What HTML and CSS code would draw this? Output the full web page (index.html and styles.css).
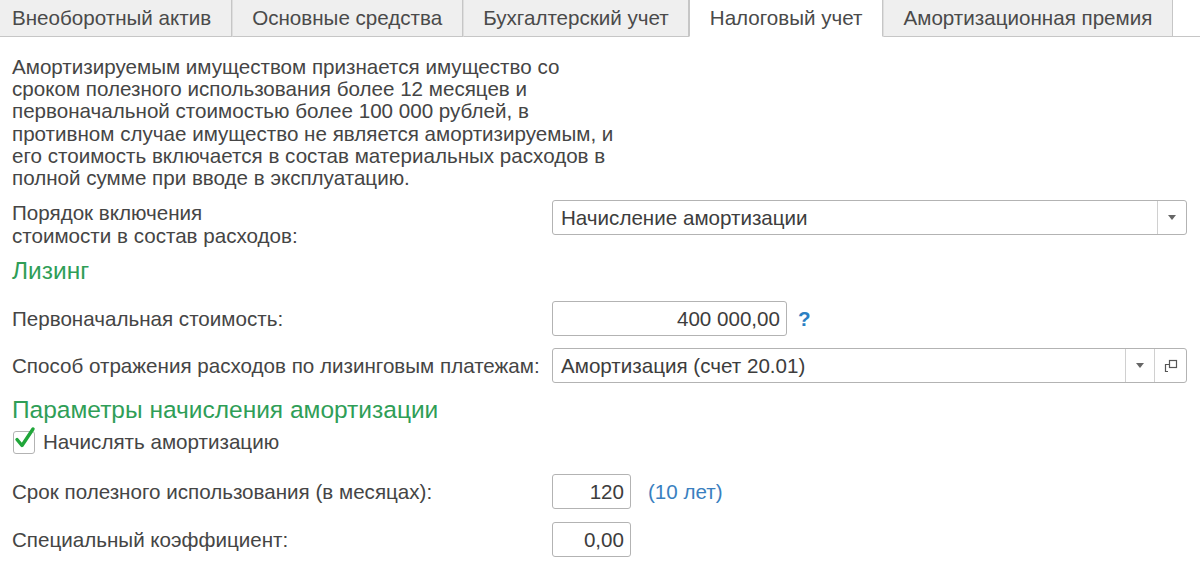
FILE: index.html
```html
<!DOCTYPE html>
<html lang="ru">
<head>
<meta charset="utf-8">
<link rel="stylesheet" href="styles.css">
</head>
<body>
<div class="tabs">
  <div class="tab first">Внеоборотный актив</div>
  <div class="tab">Основные средства</div>
  <div class="tab">Бухгалтерский учет</div>
  <div class="tab active">Налоговый учет</div>
  <div class="tab">Амортизационная премия</div>
  <div class="tab-fill"></div>
</div>
<div class="form">
  <p class="note">Амортизируемым имуществом признается имущество со<br>сроком полезного использования более 12 месяцев и<br>первоначальной стоимостью более 100 000 рублей, в<br>противном случае имущество не является амортизируемым, и<br>его стоимость включается в состав материальных расходов в<br>полной сумме при вводе в эксплуатацию.</p>

  <div class="row row-order">
    <div class="label">Порядок включения<br>стоимости в состав расходов:</div>
    <div class="field select">
      <span class="value">Начисление амортизации</span>
      <span class="btn"><span class="arrow"></span></span>
    </div>
  </div>

  <h2 class="group group-leasing">Лизинг</h2>

  <div class="row row-cost">
    <div class="label">Первоначальная стоимость:</div>
    <div class="field num cost">400 000,00</div>
    <span class="help">?</span>
  </div>

  <div class="row">
    <div class="label">Способ отражения расходов по лизинговым платежам:</div>
    <div class="field select">
      <span class="value">Амортизация (счет 20.01)</span>
      <span class="btn"><span class="arrow"></span></span>
      <span class="btn open">
        <svg width="14" height="14" viewBox="0 0 14 14"><rect x="5.5" y="1.5" width="7" height="7" fill="none" stroke="#555" stroke-width="1.2"/><path d="M5 5.5 H1.5 V12.5 H4" fill="none" stroke="#555" stroke-width="1.2"/></svg>
      </span>
    </div>
  </div>

  <h2 class="group group-params">Параметры начисления амортизации</h2>

  <label class="check-row">
    <span class="checkbox">
      <svg width="24" height="26" viewBox="0 0 24 26"><path d="M4 13.5 L9 19.5 L20 3" fill="none" stroke="#20a63a" stroke-width="3.4" stroke-linecap="round" stroke-linejoin="round"/></svg>
    </span>
    Начислять амортизацию
  </label>

  <div class="row row-term">
    <div class="label">Срок полезного использования (в месяцах):</div>
    <div class="field num short">120</div>
    <span class="hint">(10 лет)</span>
  </div>

  <div class="row row-coef">
    <div class="label">Специальный коэффициент:</div>
    <div class="field num short">0,00</div>
  </div>
</div>
</body>
</html>
```

FILE: styles.css
```css
html, body {
  margin: 0;
  padding: 0;
  background: #ffffff;
}

body {
  font-family: "Liberation Sans", Arial, sans-serif;
  font-size: 20.6px;
  color: #454545;
  width: 1200px;
  height: 583px;
  overflow: hidden;
}

.tabs {
  display: flex;
  height: 37px;
  background: #ffffff;
}

.tab {
  box-sizing: border-box;
  height: 37px;
  padding: 0 19.5px;
  display: flex;
  align-items: center;
  background: #efefef;
  border: 1px solid #c6c6c6;
  border-top: none;
  border-left-color: #dedede;
  color: #4a4a4a;
  white-space: nowrap;
}

.tab.first {
  border-left: none;
  padding-left: 12px;
}

.tab.active {
  background: #ffffff;
  border-bottom-color: #ffffff;
  border-left-color: #c6c6c6;
}

.tab-fill {
  flex: 1;
  border-bottom: 1px solid #c6c6c6;
  box-sizing: border-box;
  height: 37px;
}

.form {
  padding: 19px 13px 0 12px;
}

.note {
  margin: 0;
  line-height: 22.2px;
  white-space: nowrap;
}

.row {
  display: flex;
  align-items: center;
  margin-top: 12px;
}

.row-order {
  align-items: flex-start;
  margin-top: 11px;
}

.row-order .label {
  padding-top: 1px;
}

.label {
  width: 540px;
  flex: none;
  line-height: 23px;
}

.field {
  box-sizing: border-box;
  height: 35px;
  border: 1px solid #b3b3b3;
  border-radius: 3px;
  background: #fff;
  display: flex;
  align-items: center;
  color: #3d3d3d;
}

.select {
  flex: 1;
}

.select .value {
  flex: 1;
  padding-left: 8px;
}

.btn {
  width: 28px;
  height: 100%;
  border-left: 1px solid #d0d0d0;
  display: flex;
  align-items: center;
  justify-content: center;
}

.btn.open {
  width: 31px;
}

.arrow {
  width: 0;
  height: 0;
  border-left: 4px solid transparent;
  border-right: 4px solid transparent;
  border-top: 5px solid #666666;
}

.num {
  justify-content: flex-end;
  padding-right: 6px;
}

.cost {
  width: 235px;
}

.short {
  width: 79px;
}

.help {
  margin-left: 11px;
  color: #2b7fc3;
  font-weight: bold;
}

.hint {
  margin-left: 17px;
  color: #3a7fc0;
}

.group {
  margin: 11px 0 0;
  font-size: 24.5px;
  font-weight: normal;
  color: #2f9e57;
  line-height: 26px;
}

.row-cost {
  margin-top: 17px;
}

.group-params {
  margin-top: 14px;
}

.check-row {
  display: flex;
  align-items: center;
  margin-top: 7px;
  height: 24px;
  padding-left: 1px;
}

.checkbox {
  box-sizing: border-box;
  width: 22px;
  height: 23px;
  border: 1px solid #b3b3b3;
  border-radius: 3px;
  margin-right: 8px;
  position: relative;
}

.checkbox svg {
  position: absolute;
  left: -1px;
  top: -6px;
}

.row-term {
  margin-top: 20px;
}

.row-coef {
  margin-top: 13px;
}
```
